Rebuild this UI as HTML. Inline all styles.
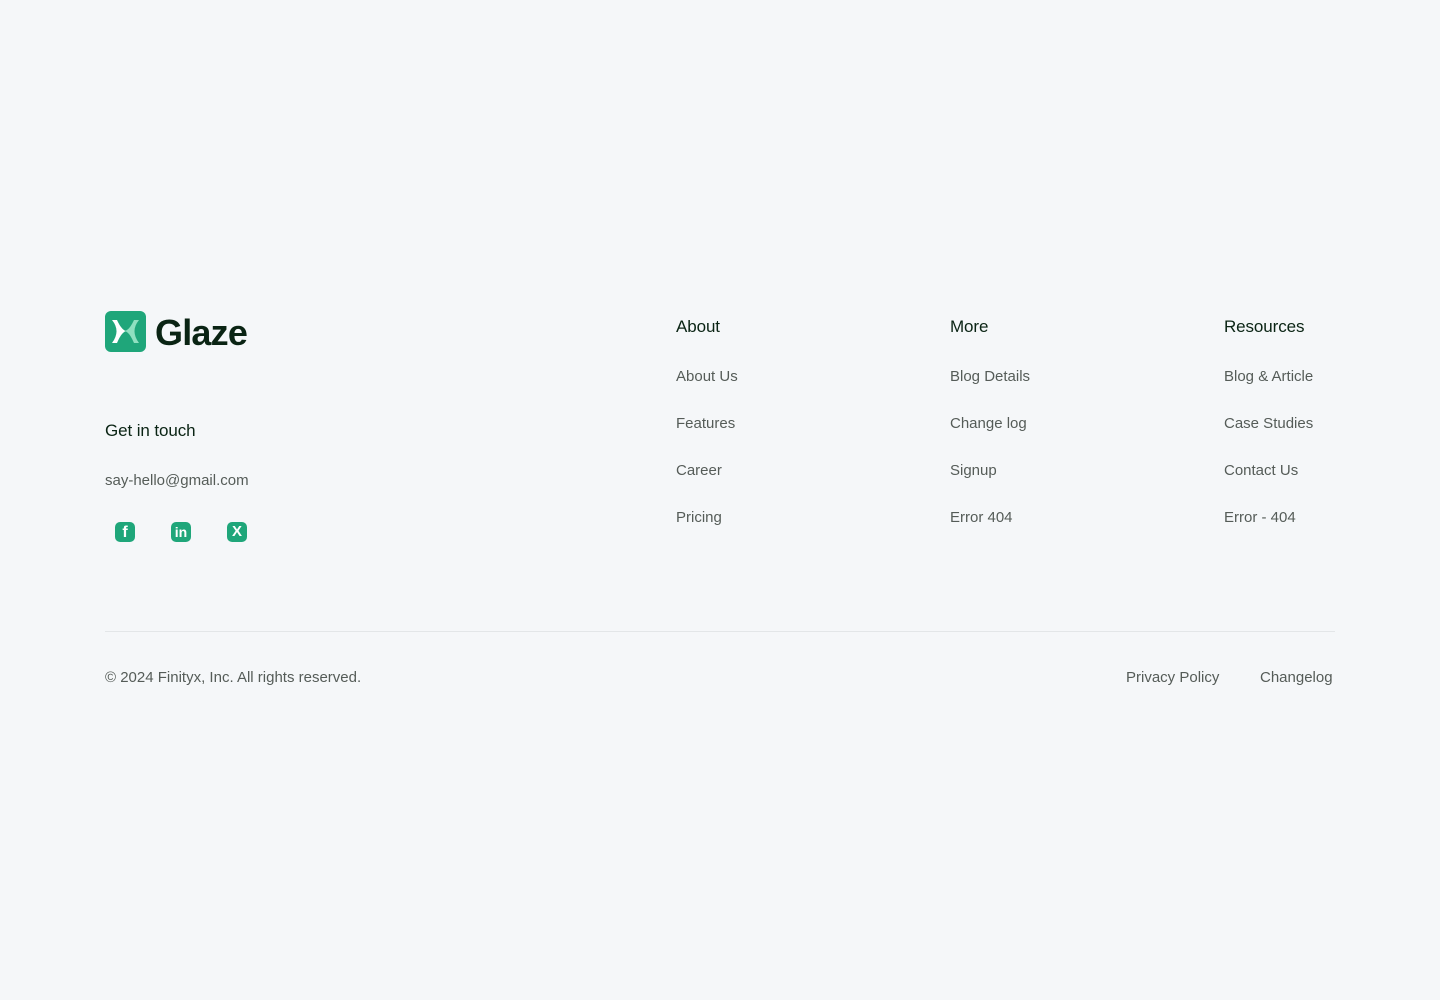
<!DOCTYPE html>
<html><head><meta charset="utf-8"><style>
*{margin:0;padding:0;box-sizing:border-box}
body{width:1440px;height:1000px;background:#f5f7f9;font-family:"Liberation Sans",sans-serif;position:relative;overflow:hidden}
.a{position:absolute;white-space:nowrap}
.h{font-size:17px;color:#0a2414;letter-spacing:-0.1px}
.l{font-size:15px;color:#555c58;letter-spacing:0}
.ic{position:absolute;top:522px;width:20px;height:20px;border-radius:5px;background:#1fa67a;color:#fff;font-weight:bold;text-align:center}
</style></head><body>
<svg class="a" style="left:105px;top:311px" width="41" height="41" viewBox="0 0 41 41">
<rect width="41" height="41" rx="6" fill="#1fa67a"/>
<path d="M7 9 L12 9 Q17 20 22 20 Q17 20 12 32 L7 32 Q16 20 7 9Z" fill="#fff"/>
<path d="M34 9 L29 9 Q24 20 19 20 Q24 20 29 32 L34 32 Q25 20 34 9Z" fill="#8fe0c0"/>
</svg>
<div class="a" style="left:155px;top:312px;font-size:36px;font-weight:bold;color:#0a2414;letter-spacing:-0.8px">Glaze</div>
<div class="a h" style="left:105px;top:421px">Get in touch</div>
<div class="a l" style="left:105px;top:472px">say-hello@gmail.com</div>
<div class="ic" style="left:115px;font-size:16px;line-height:21px">f</div>
<div class="ic" style="left:171px;font-size:14px;line-height:20px">in</div>
<div class="ic" style="left:227px;font-size:15px;line-height:20px">X</div>
<div class="a h" style="left:676px;top:317px">About</div>
<div class="a l" style="left:676px;top:368px">About Us</div>
<div class="a l" style="left:676px;top:415px">Features</div>
<div class="a l" style="left:676px;top:462px">Career</div>
<div class="a l" style="left:676px;top:509px">Pricing</div>
<div class="a h" style="left:950px;top:317px">More</div>
<div class="a l" style="left:950px;top:368px">Blog Details</div>
<div class="a l" style="left:950px;top:415px">Change log</div>
<div class="a l" style="left:950px;top:462px">Signup</div>
<div class="a l" style="left:950px;top:509px">Error 404</div>
<div class="a h" style="left:1224px;top:317px">Resources</div>
<div class="a l" style="left:1224px;top:368px">Blog &amp; Article</div>
<div class="a l" style="left:1224px;top:415px">Case Studies</div>
<div class="a l" style="left:1224px;top:462px">Contact Us</div>
<div class="a l" style="left:1224px;top:509px">Error - 404</div>
<div class="a" style="left:105px;top:631px;width:1230px;height:1px;background:#e3e6e8"></div>
<div class="a l" style="left:105px;top:669px">© 2024 Finityx, Inc. All rights reserved.</div>
<div class="a l" style="left:1126px;top:669px">Privacy Policy</div>
<div class="a l" style="left:1260px;top:669px">Changelog</div>
</body></html>
